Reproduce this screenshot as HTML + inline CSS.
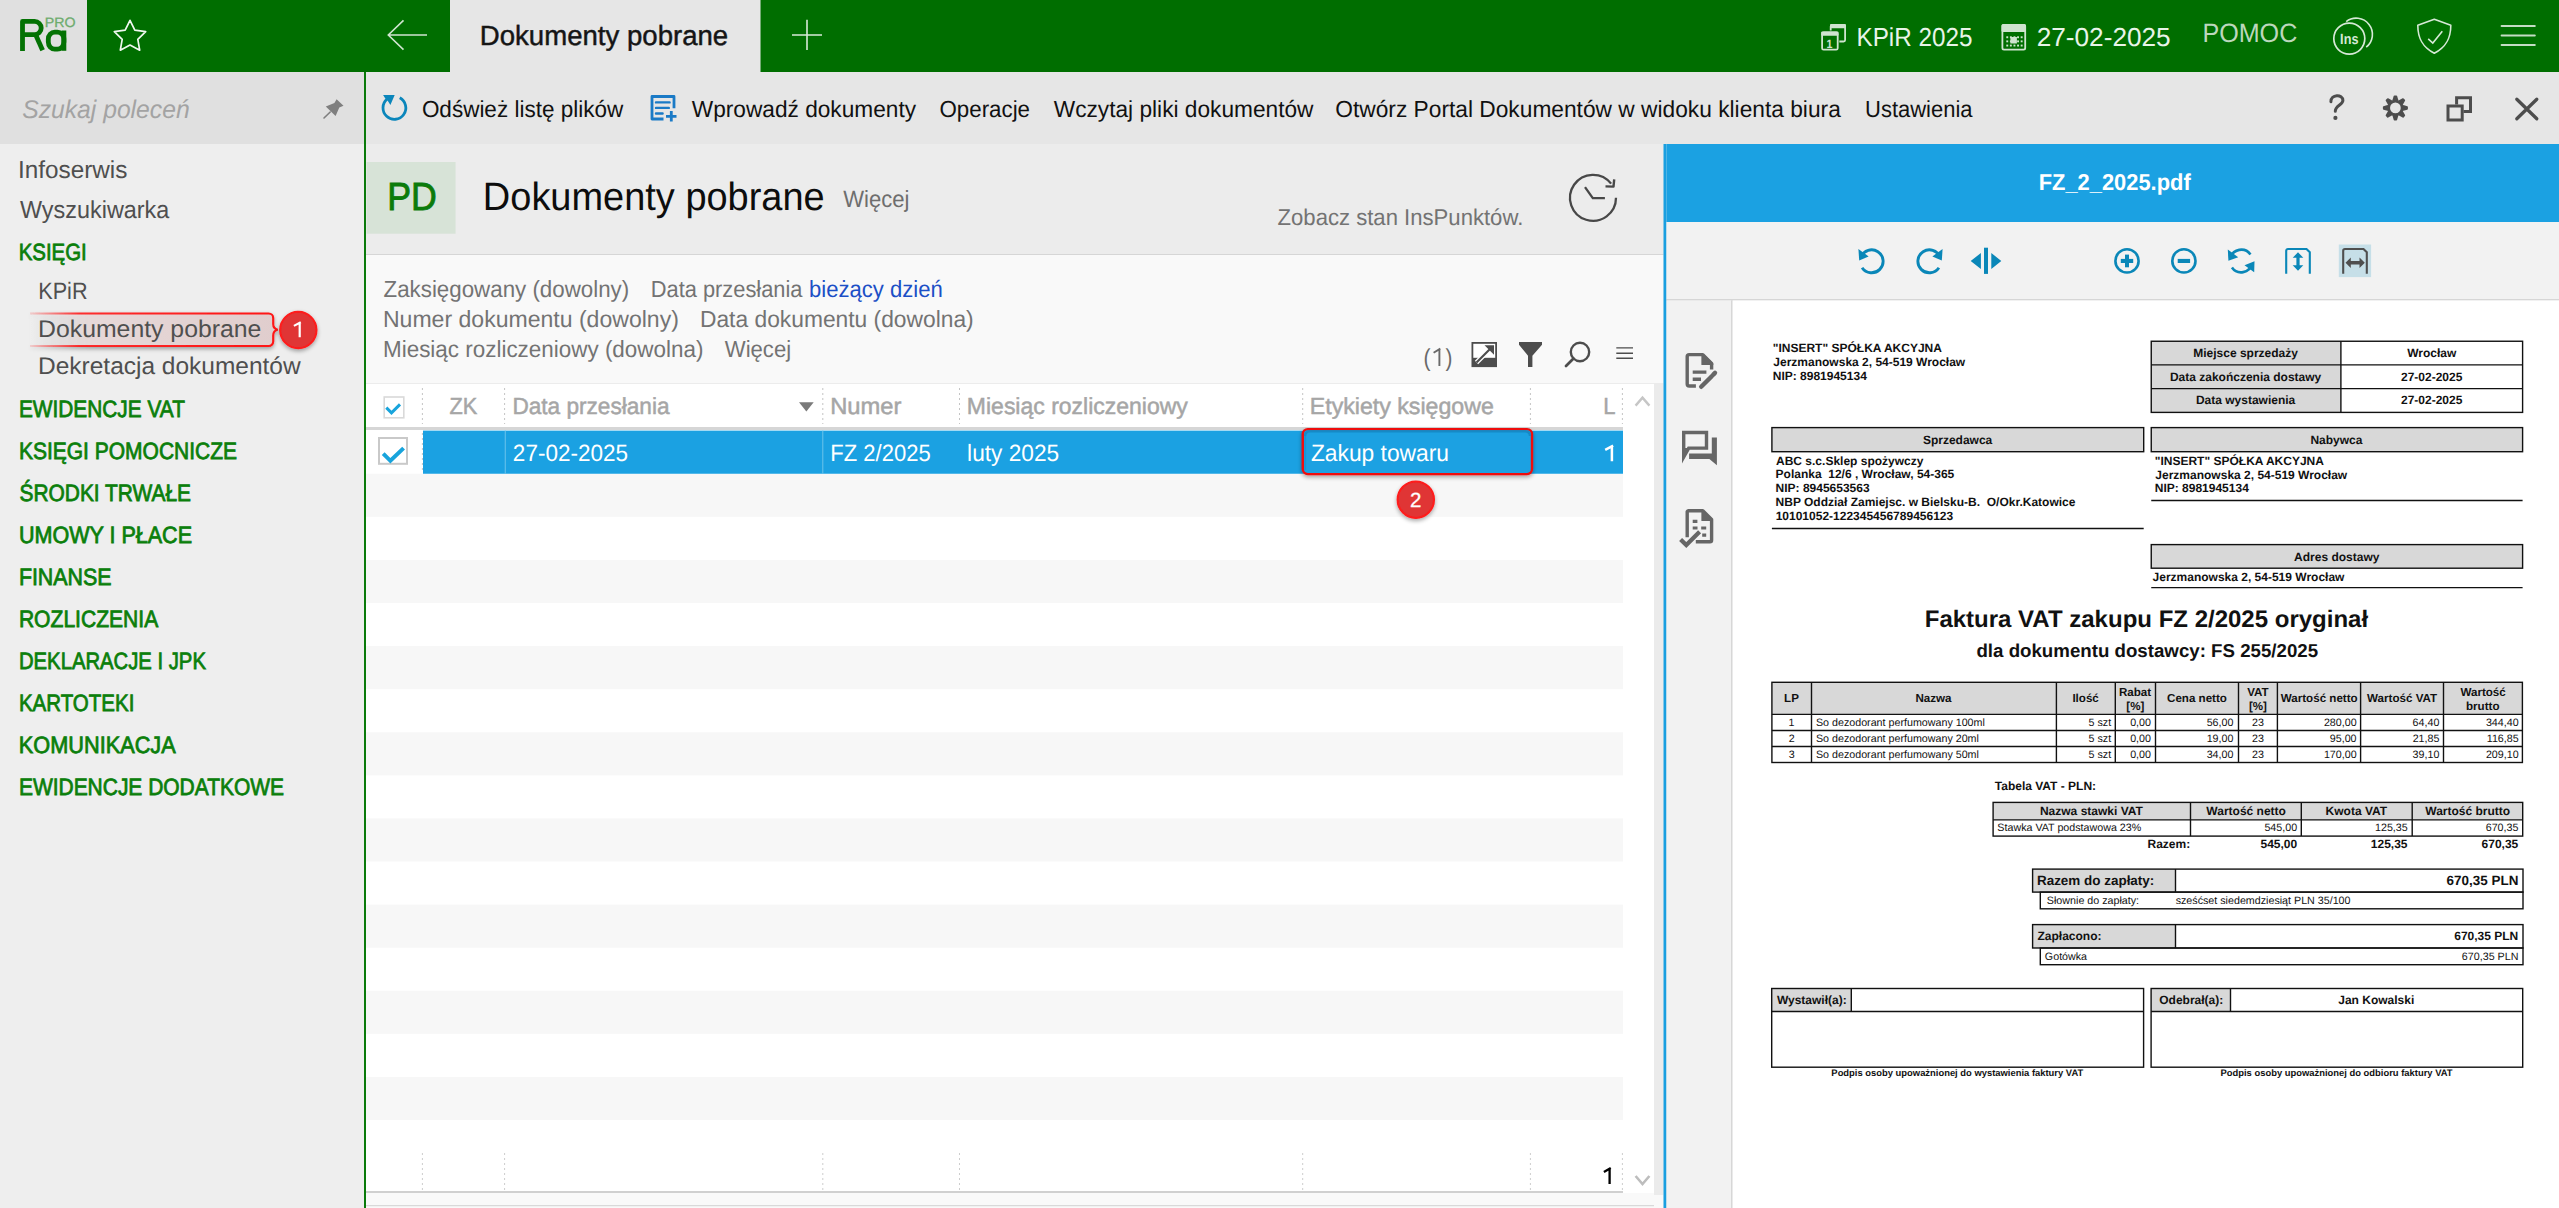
<!DOCTYPE html>
<html><head><meta charset="utf-8"><title>Dokumenty pobrane</title>
<style>html,body{margin:0;padding:0;overflow:hidden;background:#eeeeee;width:2559px;height:1208px}
svg{display:block;font-family:"Liberation Sans",sans-serif;text-rendering:geometricPrecision}</style></head>
<body><svg width="2559" height="1208" viewBox="0 0 2559 1208">
<rect x="0.00" y="0.00" width="2559.00" height="1208.00" fill="#eeeeee" />
<rect x="0.00" y="0.00" width="87.00" height="72.00" fill="#e0e0e0" />
<rect x="87.00" y="0.00" width="363.00" height="72.00" fill="#006e00" />
<rect x="450.00" y="0.00" width="310.50" height="72.00" fill="#e6e6e6" />
<rect x="760.50" y="0.00" width="1798.50" height="72.00" fill="#006e00" />
<rect x="0.00" y="72.00" width="364.00" height="72.00" fill="#e0e0e0" />
<rect x="366.00" y="72.00" width="2193.00" height="72.00" fill="#e6e6e6" />
<rect x="0.00" y="144.00" width="364.00" height="1064.00" fill="#eeeeee" />
<rect x="364.00" y="72.00" width="2.00" height="1136.00" fill="#0a7a0a" />
<rect x="366.00" y="144.00" width="1297.50" height="110.00" fill="#ececec" />
<rect x="366.00" y="254.00" width="1297.50" height="1.00" fill="#d6d6d6" />
<rect x="366.00" y="255.00" width="1297.50" height="953.00" fill="#f9f9f9" />
<g fill="none" stroke="#047204" stroke-width="4.8" stroke-linejoin="round">
<path d="M22.5 51 V21.4 H34.6 A6.6 6.6 0 0 1 34.6 34.6 H22.5" />
<path d="M36 35.5 L42.6 50.2" stroke-linecap="butt"/>
<path d="M63.9 30.5 V50.8" />
<rect x="48.3" y="32.1" width="15.6" height="17.0" rx="6.5" ry="7" />
</g>
<text x="44.86" y="26.50" font-family="'Liberation Sans'" font-size="13.60" font-weight="normal" font-style="normal" fill="#6eac6e" stroke="#6eac6e" stroke-width="0.30" textLength="30.81" lengthAdjust="spacingAndGlyphs" xml:space="preserve" >PRO</text>
<polygon points="130.00,20.30 134.82,30.17 145.69,31.70 137.80,39.33 139.70,50.15 130.00,45.00 120.30,50.15 122.20,39.33 114.31,31.70 125.18,30.17" fill="none" stroke="#f0f8f0" stroke-width="1.7" stroke-linejoin="round"/>
<path d="M403.5 20.3 L388.3 35 L403.5 49.7 M388.3 35 H427" fill="none" stroke="#cfe4cf" stroke-width="1.6"/>
<text x="479.79" y="44.50" font-family="'Liberation Sans'" font-size="27.80" font-weight="normal" font-style="normal" fill="#151515" stroke="#151515" stroke-width="0.45" textLength="248.44" lengthAdjust="spacingAndGlyphs" xml:space="preserve" >Dokumenty pobrane</text>
<path d="M807 19.7 V50 M792 35 H822" fill="none" stroke="#d8ead8" stroke-width="1.6"/>
<g fill="none" stroke="#cfe4cf" stroke-width="1.8">
<rect x="1830.7" y="24.9" width="14.4" height="16.6" rx="1.5"/>
</g>
<rect x="1830" y="24" width="16" height="4.2" fill="#cfe4cf" rx="1.2"/>
<rect x="1820.5" y="30.5" width="18.8" height="21" fill="#006e00"/>
<rect x="1822.1" y="32.3" width="15.6" height="17.4" rx="1.5" fill="none" stroke="#cfe4cf" stroke-width="1.8"/>
<rect x="1821.2" y="31.4" width="17.3" height="4.4" fill="#cfe4cf" rx="1.2"/>
<text x="1826.56" y="48.20" font-family="'Liberation Sans'" font-size="12.00" font-weight="bold" font-style="normal" fill="#cfe4cf" textLength="5.92" lengthAdjust="spacingAndGlyphs" xml:space="preserve" >1</text>
<rect x="2002.4" y="24.9" width="22.8" height="24.8" rx="1.6" fill="none" stroke="#cfe4cf" stroke-width="1.8"/>
<rect x="2001.5" y="24" width="24.5" height="8" fill="#cfe4cf" rx="1.5"/>
<rect x="2006.3" y="36.3" width="1.9" height="1.9" fill="#cfe4cf"/>
<rect x="2009.9" y="36.3" width="1.9" height="1.9" fill="#cfe4cf"/>
<rect x="2013.5" y="36.3" width="1.9" height="1.9" fill="#cfe4cf"/>
<rect x="2017.1" y="36.3" width="1.9" height="1.9" fill="#cfe4cf"/>
<rect x="2020.7" y="36.3" width="1.9" height="1.9" fill="#cfe4cf"/>
<rect x="2006.3" y="40.4" width="1.9" height="1.9" fill="#cfe4cf"/>
<rect x="2009.9" y="40.4" width="1.9" height="1.9" fill="#cfe4cf"/>
<rect x="2013.5" y="40.4" width="1.9" height="1.9" fill="#cfe4cf"/>
<rect x="2017.1" y="40.4" width="1.9" height="1.9" fill="#cfe4cf"/>
<rect x="2020.7" y="40.4" width="1.9" height="1.9" fill="#cfe4cf"/>
<rect x="2006.3" y="44.6" width="1.9" height="1.9" fill="#cfe4cf"/>
<rect x="2009.9" y="44.6" width="1.9" height="1.9" fill="#cfe4cf"/>
<rect x="2013.5" y="44.6" width="1.9" height="1.9" fill="#cfe4cf"/>
<rect x="2017.1" y="44.6" width="1.9" height="1.9" fill="#cfe4cf"/>
<rect x="2020.7" y="44.6" width="1.9" height="1.9" fill="#cfe4cf"/>
<rect x="2010.4" y="37.0" width="6.5" height="6.5" fill="#cfe4cf"/>
<text x="1856.46" y="46.00" font-family="'Liberation Sans'" font-size="26.00" font-weight="normal" font-style="normal" fill="#e8f4e8" textLength="115.97" lengthAdjust="spacingAndGlyphs" xml:space="preserve" >KPiR 2025</text>
<text x="2036.69" y="46.00" font-family="'Liberation Sans'" font-size="26.00" font-weight="normal" font-style="normal" fill="#e8f4e8" textLength="133.98" lengthAdjust="spacingAndGlyphs" xml:space="preserve" >27-02-2025</text>
<text x="2202.39" y="42.10" font-family="'Liberation Sans'" font-size="26.50" font-weight="normal" font-style="normal" fill="#bcd7bc" textLength="94.96" lengthAdjust="spacingAndGlyphs" xml:space="preserve" >POMOC</text>
<circle cx="2349.3" cy="38.6" r="15.5" fill="none" stroke="#d6e9d6" stroke-width="1.7"/>
<path d="M2346.2 21.6 A16 16 0 1 1 2366.2 47.2" fill="none" stroke="#d6e9d6" stroke-width="1.6"/>
<text x="2340.11" y="43.50" font-family="'Liberation Sans'" font-size="14.80" font-weight="bold" font-style="normal" fill="#d6e9d6" textLength="18.33" lengthAdjust="spacingAndGlyphs" xml:space="preserve" >Ins</text>
<path d="M2434.3 19.2 L2417.8 25.3 C2417.8 38 2422 47 2434.3 53.3 C2446.6 47 2450.8 38 2450.8 25.3 Z" fill="none" stroke="#d6e9d6" stroke-width="1.6" stroke-linejoin="round"/>
<path d="M2428.2 38.8 L2432.8 43 L2442.3 31.2" fill="none" stroke="#d6e9d6" stroke-width="1.6"/>
<path d="M2501.6 26 H2534.8 M2501.6 35.4 H2534.8 M2501.6 45 H2534.8" fill="none" stroke="#c4dcc4" stroke-width="2" stroke-linecap="round"/>
<text x="22.26" y="117.90" font-family="'Liberation Sans'" font-size="25.50" font-weight="normal" font-style="italic" fill="#a3a3a3" textLength="167.37" lengthAdjust="spacingAndGlyphs" xml:space="preserve" >Szukaj poleceń</text>
<path d="M336.6 99.2 L343.5 105.8 L339.3 107.6 L335.6 116.0 L325.8 106.4 L334.4 102.9 Z" fill="#7f7f7f"/>
<path d="M330.2 112 L324 118" stroke="#7f7f7f" stroke-width="1.6" stroke-linecap="round"/>
<path d="M399.75 97.83 A11.40 11.40 0 1 1 387.07 99.17" fill="none" stroke="#0b86bb" stroke-width="2.8"/>
<path d="M383.1 95 L394.7 95 L390.4 104.9 L387.6 100.6 L385.3 98.4 Z" fill="#0b86bb"/>
<path d="M663.5 119 H652 V96.5 H674 V108.2" fill="none" stroke="#1a7ac6" stroke-width="2.8" stroke-linejoin="round"/>
<path d="M656 102.4 H669.6 M656 107.9 H668.8 M656 113.5 H662.6" fill="none" stroke="#1a7ac6" stroke-width="2.4" stroke-linecap="round"/>
<path d="M666 116.3 H676.5 M671.3 111 V121.4" fill="none" stroke="#1a7ac6" stroke-width="2.8"/>
<text x="421.88" y="116.70" font-family="'Liberation Sans'" font-size="23.30" font-weight="normal" font-style="normal" fill="#111111" textLength="201.28" lengthAdjust="spacingAndGlyphs" xml:space="preserve" >Odśwież listę plików</text>
<text x="691.77" y="116.70" font-family="'Liberation Sans'" font-size="23.30" font-weight="normal" font-style="normal" fill="#111111" textLength="224.28" lengthAdjust="spacingAndGlyphs" xml:space="preserve" >Wprowadź dokumenty</text>
<text x="939.48" y="116.70" font-family="'Liberation Sans'" font-size="23.30" font-weight="normal" font-style="normal" fill="#111111" textLength="90.57" lengthAdjust="spacingAndGlyphs" xml:space="preserve" >Operacje</text>
<text x="1053.77" y="116.70" font-family="'Liberation Sans'" font-size="23.30" font-weight="normal" font-style="normal" fill="#111111" textLength="259.68" lengthAdjust="spacingAndGlyphs" xml:space="preserve" >Wczytaj pliki dokumentów</text>
<text x="1335.26" y="116.70" font-family="'Liberation Sans'" font-size="23.30" font-weight="normal" font-style="normal" fill="#111111" textLength="505.54" lengthAdjust="spacingAndGlyphs" xml:space="preserve" >Otwórz Portal Dokumentów w widoku klienta biura</text>
<text x="1865.04" y="116.70" font-family="'Liberation Sans'" font-size="23.30" font-weight="normal" font-style="normal" fill="#111111" textLength="107.48" lengthAdjust="spacingAndGlyphs" xml:space="preserve" >Ustawienia</text>
<path d="M2330.9 101.8 C2330.6 94.2 2342.9 93.6 2342.9 100.6 C2342.9 104.8 2335.3 105.6 2335.3 111.3" fill="none" stroke="#4d4d4d" stroke-width="3" stroke-linecap="round"/>
<circle cx="2335.4" cy="117.9" r="2.1" fill="#4d4d4d"/>
<path d="M2392.76 101.53 L2393.33 100.17 L2394.48 96.24 L2396.32 96.24 L2397.47 100.17 L2398.04 101.53 L2399.40 100.97 L2403.00 99.00 L2404.30 100.30 L2402.33 103.90 L2401.77 105.26 L2403.13 105.83 L2407.06 106.98 L2407.06 108.82 L2403.13 109.97 L2401.77 110.54 L2402.33 111.90 L2404.30 115.50 L2403.00 116.80 L2399.40 114.83 L2398.04 114.27 L2397.47 115.63 L2396.32 119.56 L2394.48 119.56 L2393.33 115.63 L2392.76 114.27 L2391.40 114.83 L2387.80 116.80 L2386.50 115.50 L2388.47 111.90 L2389.03 110.54 L2387.67 109.97 L2383.74 108.82 L2383.74 106.98 L2387.67 105.83 L2389.03 105.26 L2388.47 103.90 L2386.50 100.30 L2387.80 99.00 L2391.40 100.97 Z M2401.60 107.90 A6.2 6.2 0 1 0 2389.20 107.90 A6.2 6.2 0 1 0 2401.60 107.90 Z" fill="#4d4d4d" fill-rule="evenodd" stroke="#4d4d4d" stroke-width="1.7" stroke-linejoin="round"/>
<rect x="2448" y="106" width="14.2" height="14" fill="none" stroke="#4d4d4d" stroke-width="3"/>
<path d="M2456.6 104.5 V97.7 H2470.5 V111.6 H2463.5" fill="none" stroke="#4d4d4d" stroke-width="3"/>
<path d="M2516.8 99.2 L2536.8 118.8 M2536.8 99.2 L2516.8 118.8" fill="none" stroke="#4d4d4d" stroke-width="3.3" stroke-linecap="round"/>
<text x="18.01" y="177.80" font-family="'Liberation Sans'" font-size="24.60" font-weight="normal" font-style="normal" fill="#4f4f4f" textLength="109.39" lengthAdjust="spacingAndGlyphs" xml:space="preserve" >Infoserwis</text>
<text x="19.97" y="218.00" font-family="'Liberation Sans'" font-size="24.60" font-weight="normal" font-style="normal" fill="#4f4f4f" textLength="149.35" lengthAdjust="spacingAndGlyphs" xml:space="preserve" >Wyszukiwarka</text>
<text x="18.77" y="259.90" font-family="'Liberation Sans'" font-size="23.50" font-weight="normal" font-style="normal" fill="#0b7f0b" stroke="#0b7f0b" stroke-width="0.80" textLength="67.95" lengthAdjust="spacingAndGlyphs" xml:space="preserve" >KSIĘGI</text>
<text x="38.27" y="298.90" font-family="'Liberation Sans'" font-size="23.80" font-weight="normal" font-style="normal" fill="#4f4f4f" textLength="49.28" lengthAdjust="spacingAndGlyphs" xml:space="preserve" >KPiR</text>
<defs><linearGradient id="hlg" x1="0" x2="1" y1="0" y2="0"><stop offset="0" stop-color="#eeeeee" stop-opacity="0"/><stop offset="0.25" stop-color="#e6d8d8"/><stop offset="1" stop-color="#e0cdcd"/></linearGradient><linearGradient id="hlr" x1="0" x2="1" y1="0" y2="0"><stop offset="0" stop-color="#ff2020" stop-opacity="0.15"/><stop offset="0.2" stop-color="#ff1a1a" stop-opacity="0.9"/><stop offset="1" stop-color="#ff1414"/></linearGradient><filter id="sh" x="-30%" y="-30%" width="160%" height="160%"><feGaussianBlur in="SourceAlpha" stdDeviation="2.2"/><feOffset dy="1.5"/><feComponentTransfer><feFuncA type="linear" slope="0.35"/></feComponentTransfer><feMerge><feMergeNode/><feMergeNode in="SourceGraphic"/></feMerge></filter></defs>
<g filter="url(#sh)">
<path d="M30 313.5 H268.7 A4.5 4.5 0 0 1 273.2 318 V324 C273.2 327 274.5 329 277.7 329.7 C274.5 330.4 273.2 332.4 273.2 335.4 V341.5 A4.5 4.5 0 0 1 268.7 346 H30 Z" fill="url(#hlg)"/>
<path d="M30 313.5 H268.7 A4.5 4.5 0 0 1 273.2 318 V324 C273.2 327 274.5 329 277.7 329.7 C274.5 330.4 273.2 332.4 273.2 335.4 V341.5 A4.5 4.5 0 0 1 268.7 346 H30" fill="none" stroke="url(#hlr)" stroke-width="2.1"/>
</g>
<text x="38.02" y="337.00" font-family="'Liberation Sans'" font-size="24.00" font-weight="normal" font-style="normal" fill="#4f4f4f" textLength="223.39" lengthAdjust="spacingAndGlyphs" xml:space="preserve" >Dokumenty pobrane</text>
<g filter="url(#sh)"><circle cx="298.3" cy="330.0" r="18.2" fill="#e03434" stroke="#ff1a1a" stroke-width="2"/></g>
<path d="M299.70 337.30 V322.86 M300.80 322.20 L293.90 325.90" fill="none" stroke="#ffffff" stroke-width="2.20" stroke-linejoin="miter"/>
<text x="38.04" y="374.00" font-family="'Liberation Sans'" font-size="24.00" font-weight="normal" font-style="normal" fill="#4f4f4f" textLength="262.63" lengthAdjust="spacingAndGlyphs" xml:space="preserve" >Dekretacja dokumentów</text>
<text x="18.93" y="416.90" font-family="'Liberation Sans'" font-size="23.60" font-weight="normal" font-style="normal" fill="#0b7f0b" stroke="#0b7f0b" stroke-width="0.80" textLength="165.96" lengthAdjust="spacingAndGlyphs" xml:space="preserve" >EWIDENCJE VAT</text>
<text x="18.92" y="458.75" font-family="'Liberation Sans'" font-size="23.60" font-weight="normal" font-style="normal" fill="#0b7f0b" stroke="#0b7f0b" stroke-width="0.80" textLength="218.13" lengthAdjust="spacingAndGlyphs" xml:space="preserve" >KSIĘGI POMOCNICZE</text>
<text x="19.56" y="500.60" font-family="'Liberation Sans'" font-size="23.60" font-weight="normal" font-style="normal" fill="#0b7f0b" stroke="#0b7f0b" stroke-width="0.80" textLength="171.40" lengthAdjust="spacingAndGlyphs" xml:space="preserve" >ŚRODKI TRWAŁE</text>
<text x="18.88" y="543.10" font-family="'Liberation Sans'" font-size="23.60" font-weight="normal" font-style="normal" fill="#0b7f0b" stroke="#0b7f0b" stroke-width="0.80" textLength="173.17" lengthAdjust="spacingAndGlyphs" xml:space="preserve" >UMOWY I PŁACE</text>
<text x="18.89" y="585.00" font-family="'Liberation Sans'" font-size="23.60" font-weight="normal" font-style="normal" fill="#0b7f0b" stroke="#0b7f0b" stroke-width="0.80" textLength="92.65" lengthAdjust="spacingAndGlyphs" xml:space="preserve" >FINANSE</text>
<text x="18.91" y="626.90" font-family="'Liberation Sans'" font-size="23.60" font-weight="normal" font-style="normal" fill="#0b7f0b" stroke="#0b7f0b" stroke-width="0.80" textLength="139.33" lengthAdjust="spacingAndGlyphs" xml:space="preserve" >ROZLICZENIA</text>
<text x="18.98" y="668.75" font-family="'Liberation Sans'" font-size="23.60" font-weight="normal" font-style="normal" fill="#0b7f0b" stroke="#0b7f0b" stroke-width="0.80" textLength="186.93" lengthAdjust="spacingAndGlyphs" xml:space="preserve" >DEKLARACJE I JPK</text>
<text x="18.96" y="710.90" font-family="'Liberation Sans'" font-size="23.60" font-weight="normal" font-style="normal" fill="#0b7f0b" stroke="#0b7f0b" stroke-width="0.80" textLength="115.41" lengthAdjust="spacingAndGlyphs" xml:space="preserve" >KARTOTEKI</text>
<text x="18.86" y="752.75" font-family="'Liberation Sans'" font-size="23.60" font-weight="normal" font-style="normal" fill="#0b7f0b" stroke="#0b7f0b" stroke-width="0.80" textLength="156.81" lengthAdjust="spacingAndGlyphs" xml:space="preserve" >KOMUNIKACJA</text>
<text x="18.92" y="795.00" font-family="'Liberation Sans'" font-size="23.60" font-weight="normal" font-style="normal" fill="#0b7f0b" stroke="#0b7f0b" stroke-width="0.80" textLength="265.10" lengthAdjust="spacingAndGlyphs" xml:space="preserve" >EWIDENCJE DODATKOWE</text>
<rect x="366.60" y="162.00" width="89.00" height="71.70" fill="#d7e3d7" />
<text x="387.14" y="210.00" font-family="'Liberation Sans'" font-size="39.20" font-weight="normal" font-style="normal" fill="#0b7b0b" stroke="#0b7b0b" stroke-width="0.90" textLength="49.61" lengthAdjust="spacingAndGlyphs" xml:space="preserve" >PD</text>
<text x="482.86" y="210.00" font-family="'Liberation Sans'" font-size="39.50" font-weight="normal" font-style="normal" fill="#0d0d0d" textLength="341.83" lengthAdjust="spacingAndGlyphs" xml:space="preserve" >Dokumenty pobrane</text>
<text x="843.18" y="206.90" font-family="'Liberation Sans'" font-size="23.50" font-weight="normal" font-style="normal" fill="#6e6e6e" textLength="66.15" lengthAdjust="spacingAndGlyphs" xml:space="preserve" >Więcej</text>
<text x="1277.54" y="225.00" font-family="'Liberation Sans'" font-size="22.90" font-weight="normal" font-style="normal" fill="#737373" textLength="245.78" lengthAdjust="spacingAndGlyphs" xml:space="preserve" >Zobacz stan InsPunktów.</text>
<path d="M1616.00 197.80 A23.00 23.00 0 1 1 1611.12 183.64" fill="none" stroke="#484848" stroke-width="2.3"/>
<path d="M1614.2 179.3 L1613.5 186.6 L1605.5 186.4" fill="none" stroke="#484848" stroke-width="2.4" stroke-linejoin="round"/>
<path d="M1585 187.1 L1592.8 198.1 H1604.9" fill="none" stroke="#484848" stroke-width="2.3"/>
<text x="383.53" y="296.80" font-family="'Liberation Sans'" font-size="23.40" font-weight="normal" font-style="normal" fill="#737373" textLength="245.70" lengthAdjust="spacingAndGlyphs" xml:space="preserve" >Zaksięgowany (dowolny)</text>
<text x="650.75" y="296.80" font-family="'Liberation Sans'" font-size="23.40" font-weight="normal" font-style="normal" fill="#737373" textLength="151.70" lengthAdjust="spacingAndGlyphs" xml:space="preserve" >Data przesłania</text>
<text x="808.98" y="296.80" font-family="'Liberation Sans'" font-size="23.40" font-weight="normal" font-style="normal" fill="#1c4fc6" textLength="133.74" lengthAdjust="spacingAndGlyphs" xml:space="preserve" >bieżący dzień</text>
<text x="382.96" y="326.90" font-family="'Liberation Sans'" font-size="23.40" font-weight="normal" font-style="normal" fill="#737373" textLength="295.88" lengthAdjust="spacingAndGlyphs" xml:space="preserve" >Numer dokumentu (dowolny)</text>
<text x="699.98" y="326.90" font-family="'Liberation Sans'" font-size="23.40" font-weight="normal" font-style="normal" fill="#737373" textLength="273.73" lengthAdjust="spacingAndGlyphs" xml:space="preserve" >Data dokumentu (dowolna)</text>
<text x="383.01" y="357.00" font-family="'Liberation Sans'" font-size="23.40" font-weight="normal" font-style="normal" fill="#737373" textLength="320.39" lengthAdjust="spacingAndGlyphs" xml:space="preserve" >Miesiąc rozliczeniowy (dowolna)</text>
<text x="724.78" y="357.00" font-family="'Liberation Sans'" font-size="23.40" font-weight="normal" font-style="normal" fill="#737373" textLength="66.36" lengthAdjust="spacingAndGlyphs" xml:space="preserve" >Więcej</text>
<text x="1423.43" y="366.00" font-family="'Liberation Sans'" font-size="24.50" font-weight="normal" font-style="normal" fill="#6a6a6a" textLength="7.04" lengthAdjust="spacingAndGlyphs" xml:space="preserve" >(</text>
<text x="1445.39" y="366.00" font-family="'Liberation Sans'" font-size="24.50" font-weight="normal" font-style="normal" fill="#6a6a6a" textLength="6.92" lengthAdjust="spacingAndGlyphs" xml:space="preserve" >)</text>
<path d="M1439.40 366.00 V349.17 M1440.35 348.60 L1433.60 352.80" fill="none" stroke="#6a6a6a" stroke-width="1.90" stroke-linejoin="miter"/>
<rect x="1471.50" y="342.00" width="25.50" height="25.10" fill="#4d4d4d" />
<rect x="1473.30" y="343.80" width="21.90" height="14.00" fill="#ffffff" />
<path d="M1476.5 362.5 L1492 347" stroke="#ffffff" stroke-width="4.6" stroke-linecap="butt"/>
<path d="M1476.5 362.5 L1492 347" stroke="#4d4d4d" stroke-width="2.2"/>
<path d="M1484.5 345.3 H1494 V354.8 Z" fill="#4d4d4d"/>
<path d="M1519 342 H1542 V344.7 L1532.4 355.8 V367 H1528 V355.8 L1519 344.7 Z" fill="#4d4d4d"/>
<circle cx="1580" cy="352" r="9.2" fill="none" stroke="#4d4d4d" stroke-width="2.4"/>
<path d="M1573.5 358.5 L1566 366" stroke="#4d4d4d" stroke-width="2.8" stroke-linecap="round"/>
<path d="M1616.3 347.9 H1633 M1616.3 353.2 H1633 M1616.3 358.3 H1633" stroke="#4d4d4d" stroke-width="1.4"/>
<rect x="366.00" y="383.00" width="1288.00" height="1.00" fill="#ececec" />
<rect x="366.00" y="384.00" width="1288.00" height="807.00" fill="#ffffff" />
<rect x="1654.00" y="383.00" width="9.50" height="812.00" fill="#ebebeb" />
<rect x="1623.00" y="1191.00" width="31.00" height="4.00" fill="#ffffff" />
<rect x="366.00" y="427.00" width="1257.00" height="3.00" fill="#d6d6d6" />
<rect x="366.00" y="473.75" width="1257.00" height="43.08" fill="#f7f7f7" />
<rect x="366.00" y="559.92" width="1257.00" height="43.08" fill="#f7f7f7" />
<rect x="366.00" y="646.09" width="1257.00" height="43.08" fill="#f7f7f7" />
<rect x="366.00" y="732.26" width="1257.00" height="43.08" fill="#f7f7f7" />
<rect x="366.00" y="818.43" width="1257.00" height="43.08" fill="#f7f7f7" />
<rect x="366.00" y="904.60" width="1257.00" height="43.08" fill="#f7f7f7" />
<rect x="366.00" y="990.77" width="1257.00" height="43.08" fill="#f7f7f7" />
<rect x="366.00" y="1076.94" width="1257.00" height="43.08" fill="#f7f7f7" />
<line x1="422.40" y1="388.00" x2="422.40" y2="424.00" stroke="#c4c4c4" stroke-width="1.00" stroke-dasharray="2 3"/>
<line x1="422.40" y1="1153.00" x2="422.40" y2="1191.00" stroke="#cdcdcd" stroke-width="1.00" stroke-dasharray="2 3"/>
<line x1="504.60" y1="388.00" x2="504.60" y2="424.00" stroke="#c4c4c4" stroke-width="1.00" stroke-dasharray="2 3"/>
<line x1="504.60" y1="1153.00" x2="504.60" y2="1191.00" stroke="#cdcdcd" stroke-width="1.00" stroke-dasharray="2 3"/>
<line x1="822.80" y1="388.00" x2="822.80" y2="424.00" stroke="#c4c4c4" stroke-width="1.00" stroke-dasharray="2 3"/>
<line x1="822.80" y1="1153.00" x2="822.80" y2="1191.00" stroke="#cdcdcd" stroke-width="1.00" stroke-dasharray="2 3"/>
<line x1="959.50" y1="388.00" x2="959.50" y2="424.00" stroke="#c4c4c4" stroke-width="1.00" stroke-dasharray="2 3"/>
<line x1="959.50" y1="1153.00" x2="959.50" y2="1191.00" stroke="#cdcdcd" stroke-width="1.00" stroke-dasharray="2 3"/>
<line x1="1302.70" y1="388.00" x2="1302.70" y2="424.00" stroke="#c4c4c4" stroke-width="1.00" stroke-dasharray="2 3"/>
<line x1="1302.70" y1="1153.00" x2="1302.70" y2="1191.00" stroke="#cdcdcd" stroke-width="1.00" stroke-dasharray="2 3"/>
<line x1="1530.40" y1="388.00" x2="1530.40" y2="424.00" stroke="#c4c4c4" stroke-width="1.00" stroke-dasharray="2 3"/>
<line x1="1530.40" y1="1153.00" x2="1530.40" y2="1191.00" stroke="#cdcdcd" stroke-width="1.00" stroke-dasharray="2 3"/>
<line x1="1622.40" y1="388.00" x2="1622.40" y2="424.00" stroke="#c4c4c4" stroke-width="1.00" stroke-dasharray="2 3"/>
<line x1="1622.40" y1="1153.00" x2="1622.40" y2="1191.00" stroke="#cdcdcd" stroke-width="1.00" stroke-dasharray="2 3"/>
<line x1="422.40" y1="433.00" x2="422.40" y2="472.00" stroke="#c4c4c4" stroke-width="1.00" stroke-dasharray="2 3"/>
<rect x="384.2" y="397" width="19.6" height="20.8" fill="#ffffff" stroke="#d9d9d9" stroke-width="1.6"/>
<path d="M386.3 407.6 L391.5 412.8 L400 404.4" fill="none" stroke="#18a4dc" stroke-width="3"/>
<text x="449.60" y="414.00" font-family="'Liberation Sans'" font-size="23.30" font-weight="normal" font-style="normal" fill="#a6a6a6" stroke="#a6a6a6" stroke-width="0.50" textLength="27.79" lengthAdjust="spacingAndGlyphs" xml:space="preserve" >ZK</text>
<text x="512.39" y="414.00" font-family="'Liberation Sans'" font-size="23.30" font-weight="normal" font-style="normal" fill="#a6a6a6" stroke="#a6a6a6" stroke-width="0.50" textLength="157.16" lengthAdjust="spacingAndGlyphs" xml:space="preserve" >Data przesłania</text>
<path d="M799 402.3 H813.7 L806.35 411.6 Z" fill="#7a7a7a"/>
<text x="830.20" y="414.00" font-family="'Liberation Sans'" font-size="23.30" font-weight="normal" font-style="normal" fill="#a6a6a6" stroke="#a6a6a6" stroke-width="0.50" textLength="71.24" lengthAdjust="spacingAndGlyphs" xml:space="preserve" >Numer</text>
<text x="966.86" y="414.00" font-family="'Liberation Sans'" font-size="23.30" font-weight="normal" font-style="normal" fill="#a6a6a6" stroke="#a6a6a6" stroke-width="0.50" textLength="220.92" lengthAdjust="spacingAndGlyphs" xml:space="preserve" >Miesiąc rozliczeniowy</text>
<text x="1309.75" y="414.00" font-family="'Liberation Sans'" font-size="23.30" font-weight="normal" font-style="normal" fill="#a6a6a6" stroke="#a6a6a6" stroke-width="0.50" textLength="184.05" lengthAdjust="spacingAndGlyphs" xml:space="preserve" >Etykiety księgowe</text>
<text x="1603.24" y="414.00" font-family="'Liberation Sans'" font-size="23.30" font-weight="normal" font-style="normal" fill="#a6a6a6" stroke="#a6a6a6" stroke-width="0.50" textLength="12.26" lengthAdjust="spacingAndGlyphs" xml:space="preserve" >L</text>
<path d="M1635.6 405.6 L1642.5 397.6 L1649.4 405.6" fill="none" stroke="#c6c6c6" stroke-width="2.4"/>
<rect x="423.00" y="430.60" width="1200.00" height="43.15" fill="#1ba1e2" />
<line x1="505.25" y1="430.60" x2="505.25" y2="473.75" stroke="#6cc3ec" stroke-width="1.00" />
<line x1="822.80" y1="430.60" x2="822.80" y2="473.75" stroke="#6cc3ec" stroke-width="1.00" />
<rect x="379" y="438" width="28" height="25.8" fill="#ffffff" stroke="#c9c9c9" stroke-width="2"/>
<path d="M383.2 453.6 L390.4 460.8 L403.6 448.1" fill="none" stroke="#18a4dc" stroke-width="4"/>
<text x="512.87" y="461.25" font-family="'Liberation Sans'" font-size="23.60" font-weight="normal" font-style="normal" fill="#ffffff" textLength="115.13" lengthAdjust="spacingAndGlyphs" xml:space="preserve" >27-02-2025</text>
<text x="830.24" y="461.25" font-family="'Liberation Sans'" font-size="23.60" font-weight="normal" font-style="normal" fill="#ffffff" textLength="100.41" lengthAdjust="spacingAndGlyphs" xml:space="preserve" >FZ 2/2025</text>
<text x="967.11" y="461.25" font-family="'Liberation Sans'" font-size="23.60" font-weight="normal" font-style="normal" fill="#ffffff" textLength="91.98" lengthAdjust="spacingAndGlyphs" xml:space="preserve" >luty 2025</text>
<path d="M1611.90 461.25 V446.35 M1613.15 445.60 L1605.20 449.80" fill="none" stroke="#ffffff" stroke-width="2.50" stroke-linejoin="miter"/>
<defs><filter id="ins" x="-10%" y="-30%" width="120%" height="160%"><feGaussianBlur in="SourceAlpha" stdDeviation="2.5" result="b"/><feOffset dy="2" result="o"/><feComposite in="SourceAlpha" in2="o" operator="out" result="ring"/><feFlood flood-color="#000" flood-opacity="0.25"/><feComposite in2="ring" operator="in" result="sh"/><feMerge><feMergeNode in="SourceGraphic"/><feMergeNode in="sh"/></feMerge></filter></defs>
<g filter="url(#sh)"><rect x="1302.8" y="429.1" width="229.2" height="45" rx="5" fill="#1ba1e2" stroke="#ee1111" stroke-width="2.4"/></g>
<path d="M1305 436 Q1305 431.2 1310 431.2 H1525 Q1530 431.2 1530 436" fill="none" stroke="#1585bf" stroke-width="2.4" opacity="0.8"/>
<path d="M1305.2 434 V470" stroke="#1690cc" stroke-width="2" opacity="0.6"/>
<text x="1310.92" y="461.00" font-family="'Liberation Sans'" font-size="23.60" font-weight="normal" font-style="normal" fill="#ffffff" textLength="138.14" lengthAdjust="spacingAndGlyphs" xml:space="preserve" >Zakup towaru</text>
<g filter="url(#sh)"><circle cx="1415.8" cy="499.7" r="18.2" fill="#e03434" stroke="#ff1a1a" stroke-width="2"/></g>
<text x="1410.06" y="507.00" font-family="'Liberation Sans'" font-size="20.50" font-weight="normal" font-style="normal" fill="#ffffff" stroke="#ffffff" stroke-width="0.30" textLength="11.40" lengthAdjust="spacingAndGlyphs" xml:space="preserve" >2</text>
<path d="M1609.60 1184.00 V1168.69 M1610.75 1168.00 L1603.90 1172.00" fill="none" stroke="#000000" stroke-width="2.30" stroke-linejoin="miter"/>
<path d="M1635.6 1176 L1642.5 1184 L1649.4 1176" fill="none" stroke="#bdbdbd" stroke-width="2.6"/>
<rect x="366.00" y="1191.00" width="1257.00" height="2.00" fill="#d0d0d0" />
<rect x="366.00" y="1193.00" width="1288.00" height="12.00" fill="#f9f9f9" />
<rect x="366.00" y="1205.00" width="1288.00" height="1.50" fill="#d9d9d9" />
<rect x="366.00" y="1206.50" width="1297.50" height="1.50" fill="#f9f9f9" />
<rect x="1663.50" y="144.00" width="3.00" height="1064.00" fill="#1a9fe0" />
<rect x="1666.50" y="144.00" width="892.50" height="78.00" fill="#1ba1e2" />
<text x="2038.67" y="189.80" font-family="'Liberation Sans'" font-size="23.00" font-weight="bold" font-style="normal" fill="#ffffff" textLength="152.06" lengthAdjust="spacingAndGlyphs" xml:space="preserve" >FZ_2_2025.pdf</text>
<rect x="1666.50" y="222.00" width="892.50" height="77.00" fill="#f2f2f2" />
<rect x="1666.50" y="299.00" width="892.50" height="1.50" fill="#d6d6d6" />
<rect x="1666.50" y="300.50" width="64.70" height="907.50" fill="#f2f2f2" />
<rect x="1731.20" y="300.50" width="1.40" height="907.50" fill="#d2d2d2" />
<rect x="1732.60" y="300.50" width="826.40" height="907.50" fill="#ffffff" />
<path d="M1860.94 256.99 A11.50 11.50 0 1 1 1862.07 267.73" fill="none" stroke="#0a87b8" stroke-width="2.9"/>
<path d="M1858.4 249 L1859.2 260.5 L1868.6 256.4 Z" fill="#0a87b8"/>
<path d="M1938.93 267.73 A11.50 11.50 0 1 1 1940.06 256.99" fill="none" stroke="#0a87b8" stroke-width="2.9"/>
<path d="M1942.6 249 L1941.8 260.5 L1932.4 256.4 Z" fill="#0a87b8"/>
<rect x="1984.00" y="247.70" width="4.00" height="26.20" fill="#0a87b8" />
<path d="M1980.9 253 V269 L1970.7 261 Z M1991.3 253 V269 L2001.3 261 Z" fill="#0a87b8"/>
<circle cx="2127.0" cy="260.9" r="11.6" fill="none" stroke="#0a87b8" stroke-width="2.6"/>
<rect x="2120.80" y="258.90" width="12.40" height="4.10" fill="#0a87b8" />
<circle cx="2183.9" cy="260.9" r="11.6" fill="none" stroke="#0a87b8" stroke-width="2.6"/>
<rect x="2177.70" y="258.90" width="12.40" height="4.10" fill="#0a87b8" />
<rect x="2125.00" y="254.60" width="4.00" height="12.70" fill="#0a87b8" />
<path d="M2230.29 258.08 A11.30 11.30 0 0 1 2250.46 254.52" fill="none" stroke="#0a87b8" stroke-width="2.6"/>
<path d="M2252.11 263.92 A11.30 11.30 0 0 1 2231.94 267.48" fill="none" stroke="#0a87b8" stroke-width="2.6"/>
<path d="M2227.8 249.5 L2228.4 260.8 L2238.2 257.2 Z" fill="#0a87b8"/>
<path d="M2254.5 261.3 L2254.2 272.3 L2244.5 265.2 Z" fill="#0a87b8"/>
<path d="M2286.2 273.8 V250.8 A1.8 1.8 0 0 1 2288 249 H2306.5 L2309.8 252.3 V273.8" fill="none" stroke="#0a87b8" stroke-width="2.1"/>
<path d="M2298 252.2 L2303.3 257.8 H2299.6 V265.2 H2303.3 L2298 270.8 L2292.7 265.2 H2296.4 V257.8 H2292.7 Z" fill="#0a87b8"/>
<rect x="2338.80" y="244.50" width="32.30" height="32.60" fill="#c6dfe8" />
<path d="M2343.2 273.8 V250.8 A1.8 1.8 0 0 1 2345 249 H2363.5 L2366.8 252.3 V273.8" fill="none" stroke="#4f4f4f" stroke-width="2.1"/>
<path d="M2345.5 262.8 L2350.8 257.6 V261 H2359.5 V257.6 L2364.8 262.8 L2359.5 268 V264.6 H2350.8 V268 Z" fill="#4f4f4f"/>
<path d="M1695.9 386 H1689.2 A2 2 0 0 1 1687.2 384 V356.6 A2 2 0 0 1 1689.2 354.6 H1702.8 L1711.6 363.4 V369.6" fill="none" stroke="#666666" stroke-width="3.4" stroke-linejoin="round"/>
<path d="M1701.4 354 H1703.6 L1713.3 363.6 V364.9 H1701.4 Z" fill="#666666"/>
<path d="M1692.7 372.1 H1706.4 M1692.7 379.2 H1701" stroke="#666666" stroke-width="3.4"/>
<path d="M1701.2 386.8 L1711.8 376.2" stroke="#666666" stroke-width="4.4" stroke-linecap="round"/>
<path d="M1713.3 374.6 L1715.0 372.9" stroke="#666666" stroke-width="4.4" stroke-linecap="round"/>
<path d="M1683.7 457 V432.5 H1706.5 V448.1 H1688.7 Z" fill="none" stroke="#666666" stroke-width="3.4" stroke-linejoin="miter"/>
<path d="M1683.7 448 V457 L1690 448 Z" fill="#666666"/>
<path d="M1689.1 453.4 H1711.8 V437.5 H1716.9 V465.3 L1709.4 459 H1689.1 Z" fill="#666666"/>
<path d="M1687.2 537.2 V511.5 A1.6 1.6 0 0 1 1688.8 510.7 H1702.8 L1711.6 519.5 V540.2 A1.6 1.6 0 0 1 1710 541.8 H1695.8" fill="none" stroke="#666666" stroke-width="3.4" stroke-linejoin="round"/>
<path d="M1701.4 510.5 H1703.3 L1712.5 519.7 V520.9 H1701.4 Z" fill="#666666"/>
<path d="M1692.7 521.3 H1697.4 M1692.7 528 H1697.5 M1701.2 528 H1706.2 M1702.2 535.2 H1706.2" stroke="#666666" stroke-width="3.2"/>
<path d="M1680.6 539.4 L1686.3 545.1 L1699.6 531.8" fill="none" stroke="#666666" stroke-width="4.2"/>
<text x="1772.76" y="352.10" font-family="'Liberation Sans'" font-size="12.00" font-weight="bold" font-style="normal" fill="#111111" textLength="169.17" lengthAdjust="spacingAndGlyphs" xml:space="preserve" >&quot;INSERT&quot; SPÓŁKA AKCYJNA</text>
<text x="1773.36" y="365.90" font-family="'Liberation Sans'" font-size="12.00" font-weight="bold" font-style="normal" fill="#111111" textLength="191.86" lengthAdjust="spacingAndGlyphs" xml:space="preserve" >Jerzmanowska 2, 54-519 Wrocław</text>
<text x="1772.76" y="379.50" font-family="'Liberation Sans'" font-size="12.00" font-weight="bold" font-style="normal" fill="#111111" textLength="94.06" lengthAdjust="spacingAndGlyphs" xml:space="preserve" >NIP: 8981945134</text>
<rect x="2151.25" y="341.25" width="189.65" height="71.15" fill="#d8d8d8"/>
<rect x="2151.25" y="341.25" width="371.35" height="71.15" fill="none" stroke="#111111" stroke-width="1.40"/>
<line x1="2340.90" y1="341.25" x2="2340.90" y2="412.40" stroke="#111111" stroke-width="1.40" />
<line x1="2151.25" y1="364.90" x2="2522.60" y2="364.90" stroke="#111111" stroke-width="1.40" />
<line x1="2151.25" y1="388.60" x2="2522.60" y2="388.60" stroke="#111111" stroke-width="1.40" />
<text x="2193.26" y="357.40" font-family="'Liberation Sans'" font-size="12.00" font-weight="bold" font-style="normal" fill="#111111" textLength="104.71" lengthAdjust="spacingAndGlyphs" xml:space="preserve" >Miejsce sprzedaży</text>
<text x="2169.92" y="380.90" font-family="'Liberation Sans'" font-size="12.00" font-weight="bold" font-style="normal" fill="#111111" textLength="151.37" lengthAdjust="spacingAndGlyphs" xml:space="preserve" >Data zakończenia dostawy</text>
<text x="2195.90" y="404.40" font-family="'Liberation Sans'" font-size="12.00" font-weight="bold" font-style="normal" fill="#111111" textLength="99.37" lengthAdjust="spacingAndGlyphs" xml:space="preserve" >Data wystawienia</text>
<text x="2407.15" y="357.40" font-family="'Liberation Sans'" font-size="12.00" font-weight="bold" font-style="normal" fill="#111111" textLength="49.12" lengthAdjust="spacingAndGlyphs" xml:space="preserve" >Wrocław</text>
<text x="2401.03" y="380.90" font-family="'Liberation Sans'" font-size="12.00" font-weight="bold" font-style="normal" fill="#111111" textLength="61.38" lengthAdjust="spacingAndGlyphs" xml:space="preserve" >27-02-2025</text>
<text x="2401.03" y="404.40" font-family="'Liberation Sans'" font-size="12.00" font-weight="bold" font-style="normal" fill="#111111" textLength="61.38" lengthAdjust="spacingAndGlyphs" xml:space="preserve" >27-02-2025</text>
<rect x="1771.90" y="427.60" width="371.80" height="24.10" fill="#d8d8d8" stroke="#111111" stroke-width="1.40"/>
<text x="1922.94" y="443.60" font-family="'Liberation Sans'" font-size="12.00" font-weight="bold" font-style="normal" fill="#111111" textLength="69.36" lengthAdjust="spacingAndGlyphs" xml:space="preserve" >Sprzedawca</text>
<text x="1776.04" y="464.50" font-family="'Liberation Sans'" font-size="12.00" font-weight="bold" font-style="normal" fill="#111111" textLength="147.38" lengthAdjust="spacingAndGlyphs" xml:space="preserve" >ABC s.c.Sklep spożywczy</text>
<text x="1775.56" y="478.40" font-family="'Liberation Sans'" font-size="12.00" font-weight="bold" font-style="normal" fill="#111111" textLength="178.75" lengthAdjust="spacingAndGlyphs" xml:space="preserve" >Polanka  12/6 , Wrocław, 54-365</text>
<text x="1775.56" y="491.90" font-family="'Liberation Sans'" font-size="12.00" font-weight="bold" font-style="normal" fill="#111111" textLength="94.06" lengthAdjust="spacingAndGlyphs" xml:space="preserve" >NIP: 8945653563</text>
<text x="1775.56" y="505.80" font-family="'Liberation Sans'" font-size="12.00" font-weight="bold" font-style="normal" fill="#111111" textLength="299.86" lengthAdjust="spacingAndGlyphs" xml:space="preserve" >NBP Oddział Zamiejsc. w Bielsku-B.  O/Okr.Katowice</text>
<text x="1775.68" y="519.50" font-family="'Liberation Sans'" font-size="12.00" font-weight="bold" font-style="normal" fill="#111111" textLength="177.50" lengthAdjust="spacingAndGlyphs" xml:space="preserve" >10101052-122345456789456123</text>
<line x1="1771.90" y1="528.50" x2="2143.70" y2="528.50" stroke="#111111" stroke-width="1.40" />
<rect x="2151.25" y="427.60" width="371.35" height="24.10" fill="#d8d8d8" stroke="#111111" stroke-width="1.40"/>
<text x="2310.44" y="443.80" font-family="'Liberation Sans'" font-size="12.00" font-weight="bold" font-style="normal" fill="#111111" textLength="52.02" lengthAdjust="spacingAndGlyphs" xml:space="preserve" >Nabywca</text>
<text x="2154.76" y="464.90" font-family="'Liberation Sans'" font-size="12.00" font-weight="bold" font-style="normal" fill="#111111" textLength="169.17" lengthAdjust="spacingAndGlyphs" xml:space="preserve" >&quot;INSERT&quot; SPÓŁKA AKCYJNA</text>
<text x="2155.36" y="478.60" font-family="'Liberation Sans'" font-size="12.00" font-weight="bold" font-style="normal" fill="#111111" textLength="191.86" lengthAdjust="spacingAndGlyphs" xml:space="preserve" >Jerzmanowska 2, 54-519 Wrocław</text>
<text x="2154.76" y="492.40" font-family="'Liberation Sans'" font-size="12.00" font-weight="bold" font-style="normal" fill="#111111" textLength="94.06" lengthAdjust="spacingAndGlyphs" xml:space="preserve" >NIP: 8981945134</text>
<line x1="2151.25" y1="500.50" x2="2522.60" y2="500.50" stroke="#111111" stroke-width="1.40" />
<rect x="2151.25" y="544.60" width="371.35" height="23.60" fill="#d8d8d8" stroke="#111111" stroke-width="1.40"/>
<text x="2294.06" y="560.70" font-family="'Liberation Sans'" font-size="12.00" font-weight="bold" font-style="normal" fill="#111111" textLength="85.35" lengthAdjust="spacingAndGlyphs" xml:space="preserve" >Adres dostawy</text>
<text x="2152.56" y="581.00" font-family="'Liberation Sans'" font-size="12.00" font-weight="bold" font-style="normal" fill="#111111" textLength="191.86" lengthAdjust="spacingAndGlyphs" xml:space="preserve" >Jerzmanowska 2, 54-519 Wrocław</text>
<line x1="2151.25" y1="587.60" x2="2522.60" y2="587.60" stroke="#111111" stroke-width="1.40" />
<text x="1924.72" y="627.40" font-family="'Liberation Sans'" font-size="23.90" font-weight="bold" font-style="normal" fill="#111111" textLength="443.43" lengthAdjust="spacingAndGlyphs" xml:space="preserve" >Faktura VAT zakupu FZ 2/2025 oryginał</text>
<text x="1976.45" y="657.00" font-family="'Liberation Sans'" font-size="18.60" font-weight="bold" font-style="normal" fill="#111111" textLength="341.66" lengthAdjust="spacingAndGlyphs" xml:space="preserve" >dla dokumentu dostawcy: FS 255/2025</text>
<rect x="1771.9" y="682.3" width="750.5" height="32" fill="#d8d8d8"/>
<rect x="1771.90" y="682.30" width="750.50" height="80.20" fill="none" stroke="#111111" stroke-width="1.40"/>
<line x1="1811.50" y1="682.30" x2="1811.50" y2="762.50" stroke="#111111" stroke-width="1.40" />
<line x1="2056.40" y1="682.30" x2="2056.40" y2="762.50" stroke="#111111" stroke-width="1.40" />
<line x1="2115.30" y1="682.30" x2="2115.30" y2="762.50" stroke="#111111" stroke-width="1.40" />
<line x1="2155.50" y1="682.30" x2="2155.50" y2="762.50" stroke="#111111" stroke-width="1.40" />
<line x1="2238.50" y1="682.30" x2="2238.50" y2="762.50" stroke="#111111" stroke-width="1.40" />
<line x1="2277.40" y1="682.30" x2="2277.40" y2="762.50" stroke="#111111" stroke-width="1.40" />
<line x1="2360.60" y1="682.30" x2="2360.60" y2="762.50" stroke="#111111" stroke-width="1.40" />
<line x1="2443.50" y1="682.30" x2="2443.50" y2="762.50" stroke="#111111" stroke-width="1.40" />
<line x1="1771.90" y1="714.35" x2="2522.40" y2="714.35" stroke="#111111" stroke-width="1.40" />
<line x1="1771.90" y1="730.45" x2="2522.40" y2="730.45" stroke="#111111" stroke-width="1.40" />
<line x1="1771.90" y1="746.50" x2="2522.40" y2="746.50" stroke="#111111" stroke-width="1.40" />
<text x="1784.10" y="702.40" font-family="'Liberation Sans'" font-size="11.60" font-weight="bold" font-style="normal" fill="#111111" textLength="14.82" lengthAdjust="spacingAndGlyphs" xml:space="preserve" >LP</text>
<text x="1915.45" y="702.40" font-family="'Liberation Sans'" font-size="11.60" font-weight="bold" font-style="normal" fill="#111111" textLength="36.10" lengthAdjust="spacingAndGlyphs" xml:space="preserve" >Nazwa</text>
<text x="2072.39" y="702.40" font-family="'Liberation Sans'" font-size="11.60" font-weight="bold" font-style="normal" fill="#111111" textLength="26.43" lengthAdjust="spacingAndGlyphs" xml:space="preserve" >Ilość</text>
<text x="2118.93" y="695.60" font-family="'Liberation Sans'" font-size="11.60" font-weight="bold" font-style="normal" fill="#111111" textLength="32.23" lengthAdjust="spacingAndGlyphs" xml:space="preserve" >Rabat</text>
<text x="2126.35" y="710.30" font-family="'Liberation Sans'" font-size="11.60" font-weight="bold" font-style="normal" fill="#111111" textLength="18.04" lengthAdjust="spacingAndGlyphs" xml:space="preserve" >[%]</text>
<text x="2167.01" y="702.40" font-family="'Liberation Sans'" font-size="11.60" font-weight="bold" font-style="normal" fill="#111111" textLength="59.93" lengthAdjust="spacingAndGlyphs" xml:space="preserve" >Cena netto</text>
<text x="2247.22" y="695.60" font-family="'Liberation Sans'" font-size="11.60" font-weight="bold" font-style="normal" fill="#111111" textLength="21.48" lengthAdjust="spacingAndGlyphs" xml:space="preserve" >VAT</text>
<text x="2248.90" y="710.30" font-family="'Liberation Sans'" font-size="11.60" font-weight="bold" font-style="normal" fill="#111111" textLength="18.04" lengthAdjust="spacingAndGlyphs" xml:space="preserve" >[%]</text>
<text x="2280.78" y="702.40" font-family="'Liberation Sans'" font-size="11.60" font-weight="bold" font-style="normal" fill="#111111" textLength="76.90" lengthAdjust="spacingAndGlyphs" xml:space="preserve" >Wartość netto</text>
<text x="2367.08" y="702.40" font-family="'Liberation Sans'" font-size="11.60" font-weight="bold" font-style="normal" fill="#111111" textLength="70.03" lengthAdjust="spacingAndGlyphs" xml:space="preserve" >Wartość VAT</text>
<text x="2460.45" y="695.60" font-family="'Liberation Sans'" font-size="11.60" font-weight="bold" font-style="normal" fill="#111111" textLength="45.33" lengthAdjust="spacingAndGlyphs" xml:space="preserve" >Wartość</text>
<text x="2466.01" y="710.30" font-family="'Liberation Sans'" font-size="11.60" font-weight="bold" font-style="normal" fill="#111111" textLength="33.49" lengthAdjust="spacingAndGlyphs" xml:space="preserve" >brutto</text>
<text x="1788.54" y="725.60" font-family="'Liberation Sans'" font-size="10.70" font-weight="normal" font-style="normal" fill="#111111" textLength="5.95" lengthAdjust="spacingAndGlyphs" xml:space="preserve" >1</text>
<text x="1815.96" y="725.60" font-family="'Liberation Sans'" font-size="10.70" font-weight="normal" font-style="normal" fill="#111111" textLength="168.91" lengthAdjust="spacingAndGlyphs" xml:space="preserve" >So dezodorant perfumowany 100ml</text>
<text x="2088.53" y="725.60" font-family="'Liberation Sans'" font-size="10.70" font-weight="normal" font-style="normal" fill="#111111" textLength="22.60" lengthAdjust="spacingAndGlyphs" xml:space="preserve" >5 szt</text>
<text x="2130.16" y="725.60" font-family="'Liberation Sans'" font-size="10.70" font-weight="normal" font-style="normal" fill="#111111" textLength="20.82" lengthAdjust="spacingAndGlyphs" xml:space="preserve" >0,00</text>
<text x="2206.67" y="725.60" font-family="'Liberation Sans'" font-size="10.70" font-weight="normal" font-style="normal" fill="#111111" textLength="26.77" lengthAdjust="spacingAndGlyphs" xml:space="preserve" >56,00</text>
<text x="2252.01" y="725.60" font-family="'Liberation Sans'" font-size="10.70" font-weight="normal" font-style="normal" fill="#111111" textLength="11.90" lengthAdjust="spacingAndGlyphs" xml:space="preserve" >23</text>
<text x="2323.89" y="725.60" font-family="'Liberation Sans'" font-size="10.70" font-weight="normal" font-style="normal" fill="#111111" textLength="32.72" lengthAdjust="spacingAndGlyphs" xml:space="preserve" >280,00</text>
<text x="2412.57" y="725.60" font-family="'Liberation Sans'" font-size="10.70" font-weight="normal" font-style="normal" fill="#111111" textLength="26.77" lengthAdjust="spacingAndGlyphs" xml:space="preserve" >64,40</text>
<text x="2485.89" y="725.60" font-family="'Liberation Sans'" font-size="10.70" font-weight="normal" font-style="normal" fill="#111111" textLength="32.72" lengthAdjust="spacingAndGlyphs" xml:space="preserve" >344,40</text>
<text x="1788.70" y="741.75" font-family="'Liberation Sans'" font-size="10.70" font-weight="normal" font-style="normal" fill="#111111" textLength="5.95" lengthAdjust="spacingAndGlyphs" xml:space="preserve" >2</text>
<text x="1815.96" y="741.75" font-family="'Liberation Sans'" font-size="10.70" font-weight="normal" font-style="normal" fill="#111111" textLength="162.96" lengthAdjust="spacingAndGlyphs" xml:space="preserve" >So dezodorant perfumowany 20ml</text>
<text x="2088.53" y="741.75" font-family="'Liberation Sans'" font-size="10.70" font-weight="normal" font-style="normal" fill="#111111" textLength="22.60" lengthAdjust="spacingAndGlyphs" xml:space="preserve" >5 szt</text>
<text x="2130.16" y="741.75" font-family="'Liberation Sans'" font-size="10.70" font-weight="normal" font-style="normal" fill="#111111" textLength="20.82" lengthAdjust="spacingAndGlyphs" xml:space="preserve" >0,00</text>
<text x="2206.67" y="741.75" font-family="'Liberation Sans'" font-size="10.70" font-weight="normal" font-style="normal" fill="#111111" textLength="26.77" lengthAdjust="spacingAndGlyphs" xml:space="preserve" >19,00</text>
<text x="2252.01" y="741.75" font-family="'Liberation Sans'" font-size="10.70" font-weight="normal" font-style="normal" fill="#111111" textLength="11.90" lengthAdjust="spacingAndGlyphs" xml:space="preserve" >23</text>
<text x="2329.77" y="741.75" font-family="'Liberation Sans'" font-size="10.70" font-weight="normal" font-style="normal" fill="#111111" textLength="26.77" lengthAdjust="spacingAndGlyphs" xml:space="preserve" >95,00</text>
<text x="2412.68" y="741.75" font-family="'Liberation Sans'" font-size="10.70" font-weight="normal" font-style="normal" fill="#111111" textLength="26.77" lengthAdjust="spacingAndGlyphs" xml:space="preserve" >21,85</text>
<text x="2486.74" y="741.75" font-family="'Liberation Sans'" font-size="10.70" font-weight="normal" font-style="normal" fill="#111111" textLength="31.93" lengthAdjust="spacingAndGlyphs" xml:space="preserve" >116,85</text>
<text x="1788.76" y="757.90" font-family="'Liberation Sans'" font-size="10.70" font-weight="normal" font-style="normal" fill="#111111" textLength="5.95" lengthAdjust="spacingAndGlyphs" xml:space="preserve" >3</text>
<text x="1815.96" y="757.90" font-family="'Liberation Sans'" font-size="10.70" font-weight="normal" font-style="normal" fill="#111111" textLength="162.96" lengthAdjust="spacingAndGlyphs" xml:space="preserve" >So dezodorant perfumowany 50ml</text>
<text x="2088.53" y="757.90" font-family="'Liberation Sans'" font-size="10.70" font-weight="normal" font-style="normal" fill="#111111" textLength="22.60" lengthAdjust="spacingAndGlyphs" xml:space="preserve" >5 szt</text>
<text x="2130.16" y="757.90" font-family="'Liberation Sans'" font-size="10.70" font-weight="normal" font-style="normal" fill="#111111" textLength="20.82" lengthAdjust="spacingAndGlyphs" xml:space="preserve" >0,00</text>
<text x="2206.67" y="757.90" font-family="'Liberation Sans'" font-size="10.70" font-weight="normal" font-style="normal" fill="#111111" textLength="26.77" lengthAdjust="spacingAndGlyphs" xml:space="preserve" >34,00</text>
<text x="2252.01" y="757.90" font-family="'Liberation Sans'" font-size="10.70" font-weight="normal" font-style="normal" fill="#111111" textLength="11.90" lengthAdjust="spacingAndGlyphs" xml:space="preserve" >23</text>
<text x="2323.89" y="757.90" font-family="'Liberation Sans'" font-size="10.70" font-weight="normal" font-style="normal" fill="#111111" textLength="32.72" lengthAdjust="spacingAndGlyphs" xml:space="preserve" >170,00</text>
<text x="2412.57" y="757.90" font-family="'Liberation Sans'" font-size="10.70" font-weight="normal" font-style="normal" fill="#111111" textLength="26.77" lengthAdjust="spacingAndGlyphs" xml:space="preserve" >39,10</text>
<text x="2485.89" y="757.90" font-family="'Liberation Sans'" font-size="10.70" font-weight="normal" font-style="normal" fill="#111111" textLength="32.72" lengthAdjust="spacingAndGlyphs" xml:space="preserve" >209,10</text>
<text x="1994.78" y="789.70" font-family="'Liberation Sans'" font-size="12.00" font-weight="bold" font-style="normal" fill="#111111" textLength="101.33" lengthAdjust="spacingAndGlyphs" xml:space="preserve" >Tabela VAT - PLN:</text>
<rect x="1993.1" y="802.4" width="529.6" height="17.5" fill="#d8d8d8"/>
<rect x="1993.10" y="802.40" width="529.60" height="33.70" fill="none" stroke="#111111" stroke-width="1.40"/>
<line x1="2190.50" y1="802.40" x2="2190.50" y2="836.10" stroke="#111111" stroke-width="1.40" />
<line x1="2301.30" y1="802.40" x2="2301.30" y2="836.10" stroke="#111111" stroke-width="1.40" />
<line x1="2412.20" y1="802.40" x2="2412.20" y2="836.10" stroke="#111111" stroke-width="1.40" />
<line x1="1993.10" y1="819.90" x2="2522.70" y2="819.90" stroke="#111111" stroke-width="1.40" />
<text x="2039.96" y="814.90" font-family="'Liberation Sans'" font-size="12.00" font-weight="bold" font-style="normal" fill="#111111" textLength="102.91" lengthAdjust="spacingAndGlyphs" xml:space="preserve" >Nazwa stawki VAT</text>
<text x="2206.36" y="814.90" font-family="'Liberation Sans'" font-size="12.00" font-weight="bold" font-style="normal" fill="#111111" textLength="79.55" lengthAdjust="spacingAndGlyphs" xml:space="preserve" >Wartość netto</text>
<text x="2325.61" y="814.90" font-family="'Liberation Sans'" font-size="12.00" font-weight="bold" font-style="normal" fill="#111111" textLength="61.55" lengthAdjust="spacingAndGlyphs" xml:space="preserve" >Kwota VAT</text>
<text x="2425.27" y="814.90" font-family="'Liberation Sans'" font-size="12.00" font-weight="bold" font-style="normal" fill="#111111" textLength="84.88" lengthAdjust="spacingAndGlyphs" xml:space="preserve" >Wartość brutto</text>
<text x="1997.37" y="831.30" font-family="'Liberation Sans'" font-size="10.70" font-weight="normal" font-style="normal" fill="#111111" textLength="143.93" lengthAdjust="spacingAndGlyphs" xml:space="preserve" >Stawka VAT podstawowa 23%</text>
<text x="2264.39" y="831.30" font-family="'Liberation Sans'" font-size="10.70" font-weight="normal" font-style="normal" fill="#111111" textLength="32.72" lengthAdjust="spacingAndGlyphs" xml:space="preserve" >545,00</text>
<text x="2260.46" y="848.30" font-family="'Liberation Sans'" font-size="12.00" font-weight="bold" font-style="normal" fill="#111111" textLength="36.70" lengthAdjust="spacingAndGlyphs" xml:space="preserve" >545,00</text>
<text x="2374.99" y="831.30" font-family="'Liberation Sans'" font-size="10.70" font-weight="normal" font-style="normal" fill="#111111" textLength="32.72" lengthAdjust="spacingAndGlyphs" xml:space="preserve" >125,35</text>
<text x="2370.84" y="848.30" font-family="'Liberation Sans'" font-size="12.00" font-weight="bold" font-style="normal" fill="#111111" textLength="36.70" lengthAdjust="spacingAndGlyphs" xml:space="preserve" >125,35</text>
<text x="2485.69" y="831.30" font-family="'Liberation Sans'" font-size="10.70" font-weight="normal" font-style="normal" fill="#111111" textLength="32.72" lengthAdjust="spacingAndGlyphs" xml:space="preserve" >670,35</text>
<text x="2481.54" y="848.30" font-family="'Liberation Sans'" font-size="12.00" font-weight="bold" font-style="normal" fill="#111111" textLength="36.70" lengthAdjust="spacingAndGlyphs" xml:space="preserve" >670,35</text>
<text x="2147.48" y="848.30" font-family="'Liberation Sans'" font-size="12.00" font-weight="bold" font-style="normal" fill="#111111" textLength="42.68" lengthAdjust="spacingAndGlyphs" xml:space="preserve" >Razem:</text>
<rect x="2032.6" y="869.1" width="142.9" height="23" fill="#d8d8d8"/>
<rect x="2032.60" y="869.10" width="490.40" height="23.00" fill="none" stroke="#111111" stroke-width="1.40"/>
<line x1="2175.50" y1="869.10" x2="2175.50" y2="892.10" stroke="#111111" stroke-width="1.40" />
<text x="2036.96" y="885.40" font-family="'Liberation Sans'" font-size="13.45" font-weight="bold" font-style="normal" fill="#111111" textLength="117.33" lengthAdjust="spacingAndGlyphs" xml:space="preserve" >Razem do zapłaty:</text>
<text x="2446.62" y="885.40" font-family="'Liberation Sans'" font-size="13.45" font-weight="bold" font-style="normal" fill="#111111" textLength="71.77" lengthAdjust="spacingAndGlyphs" xml:space="preserve" >670,35 PLN</text>
<rect x="2040.30" y="892.10" width="482.70" height="16.70" fill="none" stroke="#111111" stroke-width="1.40"/>
<text x="2046.87" y="904.30" font-family="'Liberation Sans'" font-size="10.70" font-weight="normal" font-style="normal" fill="#111111" textLength="92.19" lengthAdjust="spacingAndGlyphs" xml:space="preserve" >Słownie do zapłaty:</text>
<text x="2175.68" y="904.30" font-family="'Liberation Sans'" font-size="10.70" font-weight="normal" font-style="normal" fill="#111111" textLength="174.85" lengthAdjust="spacingAndGlyphs" xml:space="preserve" >sześćset siedemdziesiąt PLN 35/100</text>
<rect x="2032.6" y="924.6" width="142.9" height="23.4" fill="#d8d8d8"/>
<rect x="2032.60" y="924.60" width="490.40" height="23.40" fill="none" stroke="#111111" stroke-width="1.40"/>
<line x1="2175.50" y1="924.60" x2="2175.50" y2="948.00" stroke="#111111" stroke-width="1.40" />
<text x="2037.54" y="940.30" font-family="'Liberation Sans'" font-size="12.00" font-weight="bold" font-style="normal" fill="#111111" textLength="64.00" lengthAdjust="spacingAndGlyphs" xml:space="preserve" >Zapłacono:</text>
<text x="2454.26" y="940.30" font-family="'Liberation Sans'" font-size="12.00" font-weight="bold" font-style="normal" fill="#111111" textLength="64.03" lengthAdjust="spacingAndGlyphs" xml:space="preserve" >670,35 PLN</text>
<rect x="2040.30" y="948.00" width="482.70" height="16.70" fill="none" stroke="#111111" stroke-width="1.40"/>
<text x="2044.87" y="959.60" font-family="'Liberation Sans'" font-size="10.70" font-weight="normal" font-style="normal" fill="#111111" textLength="42.22" lengthAdjust="spacingAndGlyphs" xml:space="preserve" >Gotówka</text>
<text x="2461.86" y="959.60" font-family="'Liberation Sans'" font-size="10.70" font-weight="normal" font-style="normal" fill="#111111" textLength="56.51" lengthAdjust="spacingAndGlyphs" xml:space="preserve" >670,35 PLN</text>
<rect x="1771.70" y="988.5" width="79.60" height="23" fill="#d8d8d8"/>
<rect x="1771.70" y="988.50" width="371.90" height="78.70" fill="none" stroke="#111111" stroke-width="1.40"/>
<line x1="1771.70" y1="1011.50" x2="2143.60" y2="1011.50" stroke="#111111" stroke-width="1.40" />
<line x1="1851.30" y1="988.50" x2="1851.30" y2="1011.50" stroke="#111111" stroke-width="1.40" />
<text x="1776.90" y="1004.20" font-family="'Liberation Sans'" font-size="12.00" font-weight="bold" font-style="normal" fill="#111111" textLength="69.79" lengthAdjust="spacingAndGlyphs" xml:space="preserve" >Wystawił(a):</text>
<text x="1831.36" y="1076.20" font-family="'Liberation Sans'" font-size="9.40" font-weight="bold" font-style="normal" fill="#111111" textLength="251.90" lengthAdjust="spacingAndGlyphs" xml:space="preserve" >Podpis osoby upoważnionej do wystawienia faktury VAT</text>
<rect x="2151.10" y="988.5" width="79.40" height="23" fill="#d8d8d8"/>
<rect x="2151.10" y="988.50" width="371.60" height="78.70" fill="none" stroke="#111111" stroke-width="1.40"/>
<line x1="2151.10" y1="1011.50" x2="2522.70" y2="1011.50" stroke="#111111" stroke-width="1.40" />
<line x1="2230.50" y1="988.50" x2="2230.50" y2="1011.50" stroke="#111111" stroke-width="1.40" />
<text x="2159.22" y="1004.20" font-family="'Liberation Sans'" font-size="12.00" font-weight="bold" font-style="normal" fill="#111111" textLength="64.00" lengthAdjust="spacingAndGlyphs" xml:space="preserve" >Odebrał(a):</text>
<text x="2220.52" y="1076.20" font-family="'Liberation Sans'" font-size="9.40" font-weight="bold" font-style="normal" fill="#111111" textLength="232.02" lengthAdjust="spacingAndGlyphs" xml:space="preserve" >Podpis osoby upoważnionej do odbioru faktury VAT</text>
<text x="2338.26" y="1004.20" font-family="'Liberation Sans'" font-size="12.00" font-weight="bold" font-style="normal" fill="#111111" textLength="76.03" lengthAdjust="spacingAndGlyphs" xml:space="preserve" >Jan Kowalski</text>
</svg></body></html>
